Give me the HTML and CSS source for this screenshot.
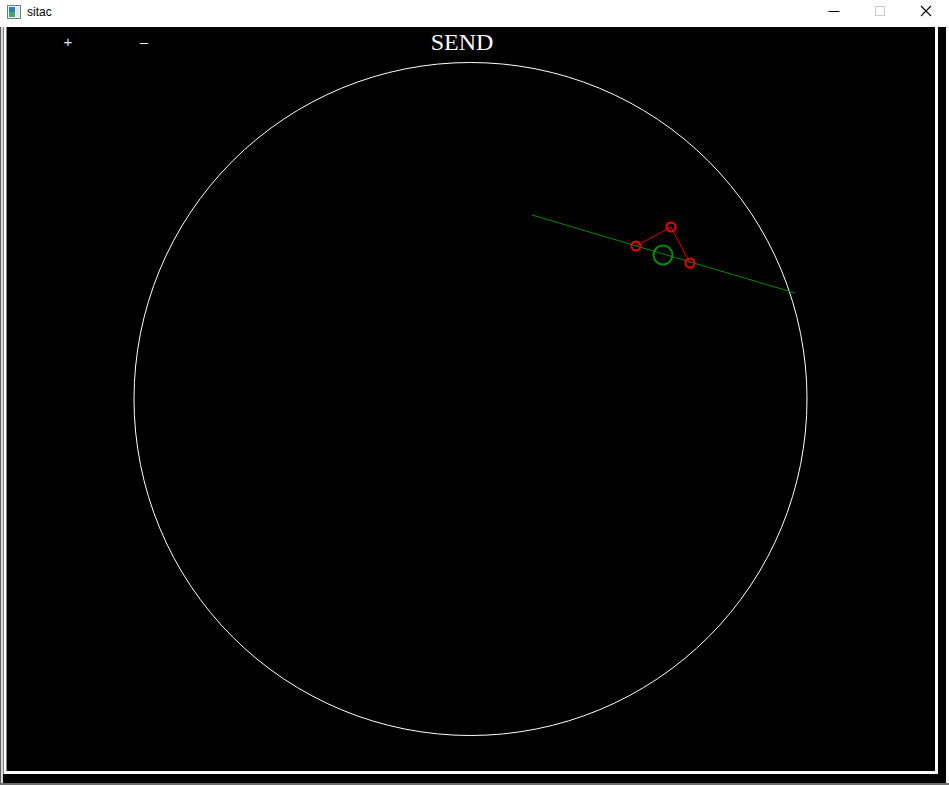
FILE: index.html
```html
<!DOCTYPE html>
<html>
<head>
<meta charset="utf-8">
<title>sitac</title>
<link rel="stylesheet" href="styles.css">
</head>
<body>
<div class="window">
  <div class="titlebar">
    <div class="title-left">
      <svg class="app-icon" width="14" height="14" viewBox="0 0 14 14">
        <rect x="0.5" y="0.5" width="13" height="13" fill="#f4f4f4" stroke="#6a7a86"/>
        <rect x="2" y="2" width="6" height="10" fill="#2f7db8"/>
        <rect x="2" y="7" width="6" height="5" fill="#3fa86a"/>
        <rect x="9" y="2" width="3" height="10" fill="#dfe6ea"/>
      </svg>
      <span class="title-text">sitac</span>
    </div>
    <div class="controls">
      <span class="ctl"><svg width="12" height="12" viewBox="0 0 12 12"><line x1="0.5" y1="6.5" x2="11.5" y2="6.5" stroke="#000" stroke-width="1"/></svg></span>
      <span class="ctl"><svg width="12" height="12" viewBox="0 0 12 12"><rect x="1.5" y="1.5" width="9" height="9" fill="none" stroke="#c8c8c8"/></svg></span>
      <span class="ctl"><svg width="12" height="12" viewBox="0 0 12 12"><path d="M1 1 L11 11 M11 1 L1 11" stroke="#000" stroke-width="1.1" fill="none"/></svg></span>
    </div>
  </div>
  <div class="client">
    <svg class="canvas" width="949" height="758" viewBox="0 27 949 758">
      <rect x="0" y="27" width="949" height="758" fill="#000"/>
      <rect x="0" y="27" width="1" height="758" fill="#5e5e5e"/>
      <rect x="1" y="27" width="2" height="758" fill="#d8d8d8"/>
      <rect x="946" y="27" width="3" height="758" fill="#ffffff"/>
      <rect x="0" y="783" width="949" height="2" fill="#6e6e6e"/>
      <rect x="5" y="22" width="931.5" height="750.5" fill="none" stroke="#fff" stroke-width="3"/>
      <circle cx="470.5" cy="399" r="336.5" fill="none" stroke="#fff" stroke-width="1"/>
      <line x1="532" y1="215" x2="795" y2="293" stroke="#008a00" stroke-width="1"/>
      <polyline points="636,246 671,227 690,263" fill="none" stroke="#e00000" stroke-width="1"/>
      <circle cx="636" cy="246" r="4.5" fill="none" stroke="#f00000" stroke-width="2"/>
      <circle cx="671" cy="227" r="4.5" fill="none" stroke="#f00000" stroke-width="2"/>
      <circle cx="690" cy="263" r="4.5" fill="none" stroke="#f00000" stroke-width="2"/>
      <circle cx="663" cy="255" r="9.5" fill="none" stroke="#0a8a0a" stroke-width="2"/>
      <text x="68" y="47" class="zoom-txt" text-anchor="middle">+</text>
      <text x="144" y="47" class="zoom-txt" text-anchor="middle">–</text>
      <text x="462" y="50" class="send-txt" text-anchor="middle">SEND</text>
    </svg>
  </div>
</div>
</body>
</html>
```
FILE: styles.css
```css
html, body {
  margin: 0;
  padding: 0;
  background: #ffffff;
}
.window {
  width: 949px;
  height: 785px;
  display: flex;
  flex-direction: column;
  overflow: hidden;
}
.titlebar {
  height: 27px;
  flex: 0 0 27px;
  background: #ffffff;
  display: flex;
  align-items: center;
  justify-content: space-between;
  font-family: "Liberation Sans", "DejaVu Sans", sans-serif;
}
.title-left {
  display: flex;
  align-items: center;
  padding-left: 7px;
  gap: 6px;
  margin-top: -4px;
}
.app-icon {
  display: block;
}
.title-text {
  font-size: 12px;
  color: #000;
}
.controls {
  display: flex;
  align-items: center;
  margin-top: -5px;
}
.ctl {
  width: 46px;
  height: 20px;
  display: flex;
  align-items: center;
  justify-content: center;
}
.ctl svg {
  display: block;
}
.client {
  flex: 1;
  position: relative;
  background: #000;
}
.canvas {
  display: block;
}
.zoom-txt {
  font-family: "Liberation Sans", "DejaVu Sans", sans-serif;
  font-size: 15px;
  fill: #dbeaff;
}
.send-txt {
  font-family: "Liberation Serif", "DejaVu Serif", serif;
  font-size: 24px;
  fill: #ffffff;
}
```
